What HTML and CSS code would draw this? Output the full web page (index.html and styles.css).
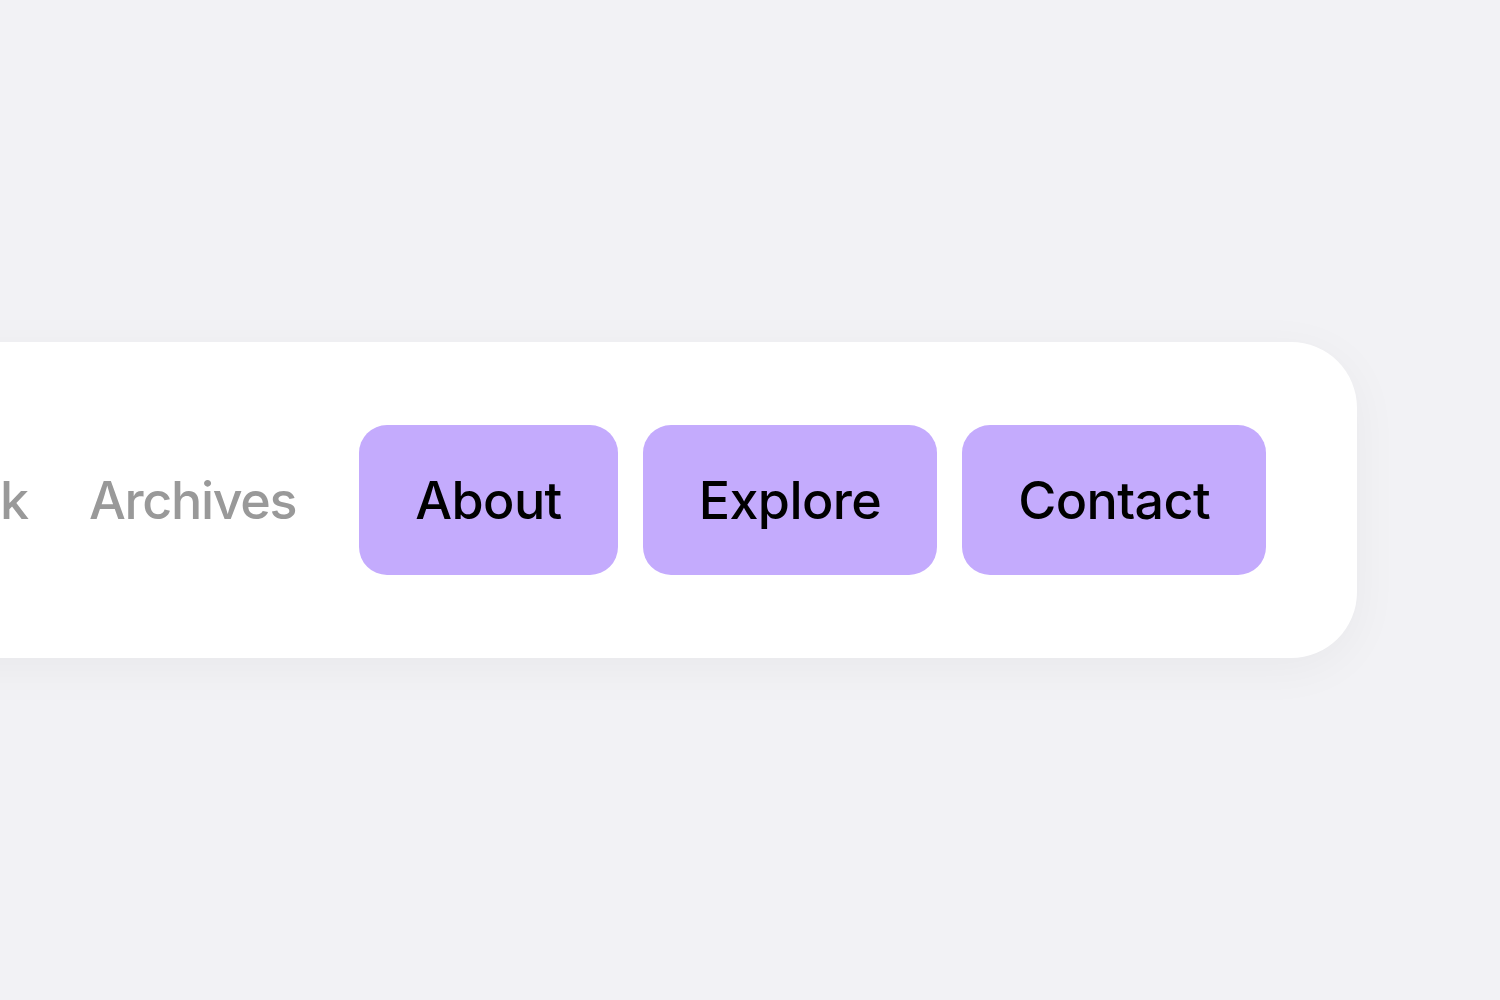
FILE: index.html
```html
<!DOCTYPE html>
<html lang="en">
<head>
<meta charset="utf-8">
<title>Nav</title>
<link rel="stylesheet" href="styles.css">
</head>
<body>
<div class="stage">
  <nav class="card">
    <div class="links">
      <a class="link" href="#">Home</a>
      <a class="link" href="#">Work</a>
      <a class="link" href="#">Archives</a>
    </div>
    <div class="buttons">
      <a class="btn" href="#">About</a>
      <a class="btn" href="#">Explore</a>
      <a class="btn" href="#">Contact</a>
    </div>
  </nav>
</div>
</body>
</html>
```
FILE: styles.css
```css
html, body {
  margin: 0;
  padding: 0;
  background: #f2f2f5;
  overflow: hidden;
}
.stage {
  height: 1000px;
  display: flex;
  align-items: center;
  justify-content: flex-end;
  padding-right: 143px;
  box-sizing: border-box;
}
.card {
  flex-shrink: 0;
  display: flex;
  align-items: center;
  gap: 63px;
  background: #ffffff;
  border-radius: 66px;
  padding: 83px 91px 83px 60px;
  box-shadow: 0 10px 50px rgba(0, 0, 0, 0.045);
  font-family: Inter, "Liberation Sans", sans-serif;
  font-size: 52px;
  font-weight: 500;
  letter-spacing: -0.6px;
}
.links {
  display: flex;
  align-items: center;
  gap: 61px;
}
.link {
  color: #999999;
  text-decoration: none;
  white-space: nowrap;
  letter-spacing: -1.3px;
}
.buttons {
  display: flex;
  align-items: center;
  gap: 25px;
}
.btn {
  display: flex;
  align-items: center;
  justify-content: center;
  height: 150px;
  padding: 0 56px;
  box-sizing: border-box;
  background: #c4abfd;
  color: #000000;
  border-radius: 28px;
  text-decoration: none;
  white-space: nowrap;
}
```
